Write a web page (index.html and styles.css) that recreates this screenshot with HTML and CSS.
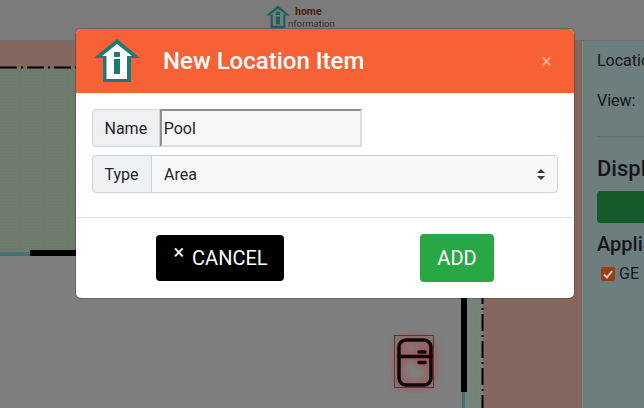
FILE: index.html

```html
<!DOCTYPE html>
<html lang="en">
<head>
  <meta charset="UTF-8">
  <title>Home Information</title>
  <link rel="stylesheet" href="styles.css">
</head>
<body>

  <div class="page">
    <header class="topbar">
      <svg class="logo-small" viewBox="0 0 46 44">
        <path class="logo-dim" d="M23 0 46 19H37V43H9V19H0Z"/>
        <path class="logo-fill-dim" d="M23 6 38 17H33V39H13V17H8Z"/>
        <rect class="logo-dim" x="19" y="12" width="8" height="6" rx="1"/>
        <rect class="logo-dim" x="19" y="21" width="8" height="15"/>
      </svg>
      <div class="brand">
        <span class="brand-top">home</span>
        <span class="brand-bottom">nformation</span>
      </div>
    </header>

    <div class="main">
      <div class="plan">
        <svg class="plan-svg" viewBox="0 41 582 367">
          <defs>
            <pattern id="dots" width="3" height="3" patternUnits="userSpaceOnUse">
              <rect width="1" height="1" fill="#000" fill-opacity=".04"/>
            </pattern>
          </defs>
          <rect x="0" y="41" width="582" height="27" fill="#84675f"/>
          <rect x="483" y="41" width="99" height="367" fill="#84675f"/>
          <rect x="0" y="68" width="483" height="185" fill="#6f7b6d"/>
          <rect x="467" y="253" width="16" height="155" fill="#75857a"/>
          <rect x="0" y="68" width="483" height="185" fill="url(#dots)"/>
          <rect x="467" y="253" width="16" height="155" fill="url(#dots)"/>
          <rect x="0" y="252" width="30" height="1" fill="#5b6b66"/>
          <rect x="0" y="253" width="30" height="3" fill="#3c7478"/>
          <rect x="30" y="250" width="440" height="6" fill="#000"/>
          <rect x="461" y="250" width="6" height="142" fill="#000"/>
          <rect x="462" y="392" width="3" height="16" fill="#3c7478"/>
          <path class="dash" d="M0 67.5H482.500V408"/>
        </svg>
        <div class="fridge">
          <svg viewBox="0 0 36 49">
            <rect x="2" y="2" width="32" height="45" rx="7" class="fridge-line"/>
            <path d="M2 18.500H34" class="fridge-line"/>
            <path d="M22 14H28M22 24.500H28" class="fridge-line"/>
          </svg>
        </div>
      </div>

      <aside class="side">
        <p class="side-text">Location</p>
        <p class="side-text side-view">View:</p>
        <hr class="side-rule">
        <h3 class="side-title">Display</h3>
        <div class="side-btn"></div>
        <h4 class="side-sub">Appliances</h4>
        <div class="side-check">
          <span class="check-box">
            <svg viewBox="0 0 14 14"><path d="M3 7.500 6 10.500 11 4"/></svg>
          </span>
          <span>GE</span>
        </div>
      </aside>
    </div>

    <div class="modal">
      <div class="modal-head">
        <svg class="logo-big" viewBox="0 0 46 44">
          <path class="logo-line" d="M23 0 46 19H37V43H9V19H0Z"/>
          <path class="logo-fill" d="M23 5 38 17H33V40H12.500V17H8Z"/>
          <rect class="logo-line" x="20" y="13" width="6" height="5" rx="1"/>
          <rect class="logo-line" x="20" y="20" width="6" height="15"/>
        </svg>
        <h2 class="modal-title">New Location Item</h2>
        <span class="modal-close">×</span>
      </div>

      <div class="modal-body">
        <div class="field">
          <span class="addon">Name</span>
          <input class="name-input" type="text" value="Pool">
        </div>
        <div class="field">
          <span class="addon addon-type">Type</span>
          <div class="select-box">
            <span>Area</span>
            <svg class="arrows" viewBox="0 0 8 11"><path d="M4 0 8 4H0ZM4 11 0 7H8Z"/></svg>
          </div>
        </div>
      </div>

      <div class="modal-foot">
        <button class="btn btn-cancel"><span class="btn-x">×</span>CANCEL</button>
        <button class="btn btn-add">ADD</button>
      </div>
    </div>
  </div>

</body>
</html>
```

FILE: styles.css

```css
* {
  box-sizing: border-box;
}
body {
  margin: 0;
  font-family: Roboto, "Liberation Sans", sans-serif;
  font-size: 16px;
  color: #212529;
}
.page {
  position: relative;
  width: 644px;
  height: 408px;
  overflow: hidden;
  background: #7f7f7f;
}
.topbar {
  display: flex;
  height: 41px;
  padding: 5px 0 0 266px;
  background: #7b7b7b;
  border-bottom: 1px solid #6f6f6f;
}
.logo-small {
  width: 24px;
  height: 24px;
}
.logo-dim {
  fill: #17605f;
}
.logo-line {
  fill: #1b7a78;
}
.logo-fill-dim {
  fill: #7b7b7b;
}
.logo-fill {
  fill: #fff;
}
.brand {
  display: flex;
  flex-direction: column;
  margin-left: -2px;
}
.brand-top {
  margin: 0 0 0 7px;
  font-size: 10.500px;
  line-height: 13px;
  font-weight: 700;
  color: #4b1d14;
}
.brand-bottom {
  font-size: 9.500px;
  line-height: 11px;
  color: #33302f;
}
.main {
  display: flex;
  height: 367px;
}
.plan {
  position: relative;
  width: 582px;
}
.plan-svg {
  display: block;
  width: 582px;
  height: 367px;
}
.dash {
  fill: none;
  stroke: #000;
  stroke-width: 2;
  stroke-dasharray: 17 4 2 4;
}
.fridge {
  position: absolute;
  left: 394px;
  top: 294px;
  width: 40px;
  height: 53px;
  padding: 2px;
  border: 1px solid #4a3a3a;
}
.fridge svg {
  display: block;
  width: 36px;
  height: 49px;
  filter: drop-shadow(0 0 5px rgba(210, 30, 30, .9));
}
.fridge-line {
  fill: none;
  stroke: #0a0a0a;
  stroke-width: 3.500px;
  stroke-linecap: round;
}
.side {
  flex: 1;
  min-width: 0;
  padding: 10px 0 0 14px;
  background: #6d7e7e;
  border-left: 1px solid #7b8b8b;
  white-space: nowrap;
  color: #14161c;
}
.side-text {
  margin: 0;
  line-height: 20px;
}
.side-view {
  margin-top: 20px;
}
.side-rule {
  margin: 25px 0 0;
  border: 0;
  border-top: 1px solid #5f6f6f;
}
.side-title {
  margin: 19px 0 0;
  font-size: 22px;
  line-height: 26px;
  font-weight: 500;
}
.side-btn {
  height: 32px;
  margin-top: 9px;
  background: #16592a;
  border-radius: 4px 0 0 4px;
}
.side-sub {
  margin: 9px 0 0;
  font-size: 20px;
  line-height: 24px;
  font-weight: 500;
}
.side-check {
  display: flex;
  align-items: center;
  gap: 4px;
  margin: 8px 0 0 4px;
  font-size: 16px;
  line-height: 20px;
}
.check-box {
  width: 14px;
  height: 14px;
  background: #9c3d1a;
  border-radius: 2px;
}
.check-box svg {
  display: block;
  fill: none;
  stroke: #d8d0cc;
  stroke-width: 2;
}
.modal {
  position: absolute;
  left: 76px;
  top: 29px;
  width: 498px;
  height: 269px;
  background: #fff;
  border-radius: 5px;
  overflow: hidden;
  box-shadow: 0 0 0 1px rgba(0, 0, 0, .2);
}
.modal-head {
  display: flex;
  align-items: center;
  height: 64px;
  padding: 0 22px 0 18px;
  background: #f66136;
}
.logo-big {
  width: 46px;
  height: 44px;
}
.modal-title {
  flex: 1;
  margin: 0 0 0 23px;
  font-size: 24px;
  font-weight: 500;
  color: #fff;
}
.modal-close {
  font-size: 20px;
  color: #fbb09b;
}
.modal-body {
  display: flex;
  flex-direction: column;
  gap: 8px;
  padding: 16px 16px 24px;
  border-bottom: 1px solid #e4e4e4;
}
.field {
  display: flex;
  height: 38px;
}
.addon {
  display: flex;
  align-items: center;
  padding: 0 11.500px;
  background: #eff0f1;
  border: 1px solid #ced4da;
  border-radius: 4px 0 0 4px;
}
.addon-type {
  width: 60px;
}
.name-input {
  width: 202px;
  padding: 1px 2px;
  font: inherit;
  color: #212529;
  background: #f7f7f7;
  border: 2px solid #ddd;
  border-top-color: #8f8f8f;
  border-left-color: #8f8f8f;
  outline: 0;
}
.select-box {
  flex: 1;
  display: flex;
  align-items: center;
  justify-content: space-between;
  padding: 0 12px;
  background: #f7f7f7;
  border: 1px solid #ced4da;
  border-left: 0;
  border-radius: 0 4px 4px 0;
}
.arrows {
  width: 8px;
  height: 11px;
  fill: #343a40;
}
.modal-foot {
  display: flex;
  justify-content: space-between;
  align-items: center;
  padding: 16px 80px;
}
.btn {
  height: 46px;
  border: 0;
  border-radius: 4px;
  font-family: inherit;
  font-size: 20px;
  color: #fff;
}
.btn-cancel {
  width: 128px;
  padding: 0 0 0 1px;
  background: #000;
}
.btn-x {
  position: relative;
  top: -6px;
  margin-right: 8px;
  font-size: 20px;
}
.btn-add {
  width: 74px;
  height: 48px;
  background: #28a745;
}
```
